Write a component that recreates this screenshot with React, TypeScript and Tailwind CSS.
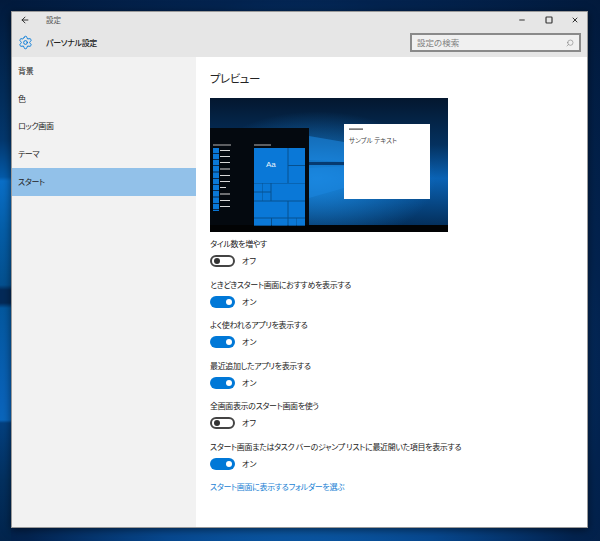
import { ArrowLeft, Minus, Search, Settings, Square, X } from "lucide-react";

const navItems = ["背景", "色", "ロック画面", "テーマ", "スタート"];

const options = [
  { label: "タイル数を増やす", on: false },
  { label: "ときどきスタート画面におすすめを表示する", on: true },
  { label: "よく使われるアプリを表示する", on: true },
  { label: "最近追加したアプリを表示する", on: true },
  { label: "全画面表示のスタート画面を使う", on: false },
  { label: "スタート画面またはタスク バーのジャンプ リストに最近開いた項目を表示する", on: true },
];

const tiles = [
  [44, 50, 33.5, 35],
  [78.5, 50, 16.5, 17],
  [78.5, 68, 16.5, 17],
  [44, 85.5, 8, 8],
  [52.5, 85.5, 8, 8],
  [44, 94.5, 8, 8],
  [52.5, 94.5, 8, 8],
  [61.5, 85.5, 33.5, 17],
  [44, 103.5, 33.5, 16],
  [78.5, 103.5, 16.5, 16],
  [44, 120.5, 17, 7],
  [62, 120.5, 15.5, 7],
  [78.5, 120.5, 8, 7],
  [87, 120.5, 8, 7],
];

const listY = [50, 56, 62, 68.5, 75, 81, 87, 93.5, 100, 106];

const Toggle = ({ on }: { on: boolean }) =>
  on ? (
    <span className="flex h-[12px] w-[25px] items-center justify-end rounded-full bg-[#0078d7] pr-[3px]">
      <span className="h-[6px] w-[6px] rounded-full bg-white" />
    </span>
  ) : (
    <span className="flex h-[12px] w-[25px] items-center rounded-full border-2 border-[#444444] bg-white pl-[2px]">
      <span className="h-[6px] w-[6px] rounded-full bg-[#333333]" />
    </span>
  );

const Preview = () => (
  <svg width="238" height="134" viewBox="0 0 238 134" className="block">
    <defs>
      <linearGradient id="sky" x1="0" y1="0" x2="0" y2="1">
        <stop offset="0" stopColor="#04172f" />
        <stop offset="0.35" stopColor="#04315f" />
        <stop offset="0.6" stopColor="#0a62b4" />
        <stop offset="1" stopColor="#03284f" />
      </linearGradient>
      <radialGradient id="glow" cx="0.45" cy="0.6" r="0.5">
        <stop offset="0" stopColor="#1c8fe8" stopOpacity="0.85" />
        <stop offset="1" stopColor="#1c8fe8" stopOpacity="0" />
      </radialGradient>
    </defs>
    <rect width="238" height="134" fill="url(#sky)" />
    <rect width="238" height="134" fill="url(#glow)" />
    <polygon points="99,38 134,44 134,64 99,62" fill="#1b86de" opacity="0.6" />
    <polygon points="99,70 134,68 134,90 99,100" fill="#1b86de" opacity="0.6" />
    <rect x="99" y="64" width="35" height="3" fill="#063a70" />
    <rect x="0" y="30" width="99" height="97" fill="#04090f" />
    <rect x="0" y="127" width="238" height="7" fill="#020304" />

    <rect x="3" y="46.5" width="18" height="1" fill="#b5b5b5" />
    <rect x="3" y="50" width="6" height="63" fill="#0a78d7" />
    {listY.map((y) => (
      <g key={y}>
        <rect x="3" y={y + 5} width="6" height="1" fill="#062a50" />
        <rect x="10" y={y + 2} width={y === 87 ? 6 : 10} height="1" fill="#d8d8d8" />
      </g>
    ))}

    <rect x="44" y="46.5" width="17" height="1" fill="#b5b5b5" />
    <rect x="44" y="50" width="51" height="77.5" fill="#06508f" />
    {tiles.map(([x, y, w, h]) => (
      <rect key={`${x}-${y}`} x={x} y={y} width={w} height={h} fill="#0a78d7" />
    ))}
    <text x="56" y="69" fontSize="8" fill="#e8f3fc" fontFamily="'Liberation Sans', sans-serif">
      Aa
    </text>

    <rect x="134" y="26" width="86" height="75" fill="#ffffff" />
    <rect x="139" y="30.5" width="14" height="1.2" fill="#444444" />
    <text x="139" y="44.5" fontSize="6.5" fill="#444444" fontFamily="'Noto Sans CJK JP', sans-serif">
      サンプル テキスト
    </text>
  </svg>
);

export default function App() {
  return (
    <div className="h-[541px] w-[600px] overflow-hidden pl-[11px] pt-[11px] font-['Noto_Sans_CJK_JP',sans-serif] text-[#222222] [font-feature-settings:'palt'] [background:linear-gradient(to_bottom,#021a3c_0px,#032e5c_100px,#04386e_140px,#045aa8_177px,#0a6fc8_181px,#055ea8_230px,#04508f_285px,#042a58_290px,#042a58_303px,#04589f_308px,#0a62b8_400px,#0a66bc_420px,#04407f_423px,#03305f_480px,#02244c_541px)_0_0/11px_100%_no-repeat,radial-gradient(ellipse_at_50%_68%,#1273c9_0%,#07488f_45%,#03234f_72%,#021a3c_100%)]">
      <div className="flex h-[517px] w-[577px] flex-col border border-[#9a9a9a] bg-white shadow-[0_2px_8px_rgba(0,0,0,0.5)]">
        {/* Title bar */}
        <div className="bg-[#e6e6e6]">
          <div className="flex h-[16px] items-center">
            <ArrowLeft className="ml-[8px] h-[10px] w-[10px] text-[#222222]" strokeWidth={2.2} />
            <span className="ml-[16px] text-[7.5px] text-[#555555]">設定</span>
            <div className="ml-auto mr-[8px] flex items-center gap-[18.5px]">
              <Minus className="h-[8px] w-[8px] text-[#333333]" strokeWidth={3} />
              <Square className="h-[8px] w-[8px] text-[#333333]" strokeWidth={3.5} />
              <X className="h-[8px] w-[8px] text-[#333333]" strokeWidth={3} />
            </div>
          </div>
          <div className="flex h-[29px] items-center">
            <Settings className="ml-[6px] h-[15px] w-[15px] text-[#0078d7]" strokeWidth={1.5} />
            <span className="ml-[13px] text-[8px] font-medium tracking-[-0.3px]">パーソナル設定</span>
            <div className="ml-auto mr-[6px] flex h-[19px] w-[171px] items-center justify-between border-2 border-[#8a8a8a] bg-[#f0f0f0] px-[5px]">
              <span className="text-[8.5px] text-[#808080]">設定の検索</span>
              <Search className="h-[8px] w-[8px] -scale-x-100 text-[#808080]" strokeWidth={1.8} />
            </div>
          </div>
        </div>

        <div className="flex flex-1">
          {/* Sidebar */}
          <nav className="w-[184px] bg-[#f2f2f2]">
            {navItems.map((item) => (
              <div
                key={item}
                className={`flex h-[27.8px] items-center pl-[6px] text-[8px] tracking-[-0.35px] ${
                  item === "スタート" ? "bg-[#92c1e9]" : ""
                }`}
              >
                {item}
              </div>
            ))}
          </nav>

          {/* Content */}
          <main className="flex-1 pl-[14px]">
            <h1 className="mt-[11px] text-[11.5px] leading-[20px] tracking-[-0.5px]">プレビュー</h1>
            <div className="mt-[10px]">
              <Preview />
            </div>
            <div className="mt-[3px]">
              {options.map((o) => (
                <div key={o.label} className="h-[40.5px]">
                  <div className="flex h-[18px] items-center text-[8px] tracking-[-0.35px]">{o.label}</div>
                  <div className="flex h-[16px] items-center gap-[7px]">
                    <Toggle on={o.on} />
                    <span className="text-[8px]">{o.on ? "オン" : "オフ"}</span>
                  </div>
                </div>
              ))}
            </div>
            <a className="flex h-[18px] items-center text-[8px] tracking-[-0.35px] text-[#1a7fd4]">
              スタート画面に表示するフォルダーを選ぶ
            </a>
          </main>
        </div>
      </div>
    </div>
  );
}
